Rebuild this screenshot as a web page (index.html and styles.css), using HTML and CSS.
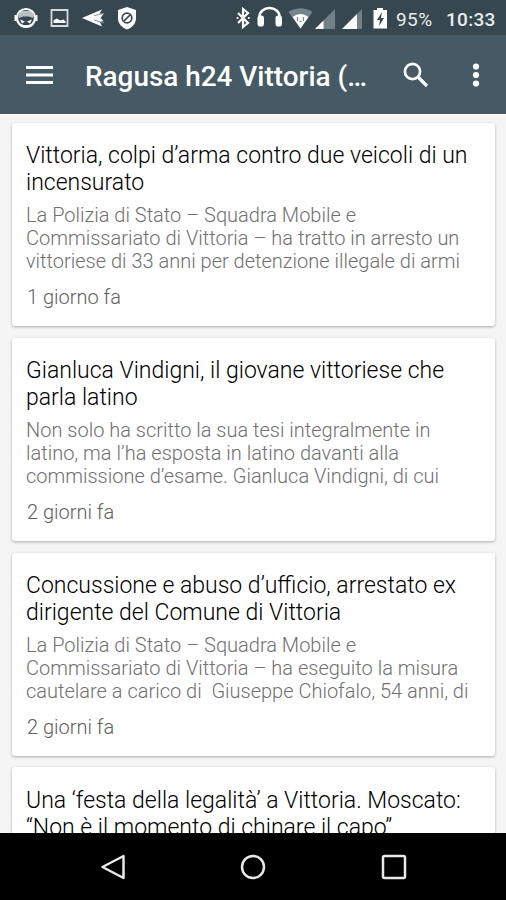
FILE: index.html
```
<!DOCTYPE html>
<html lang="it">
<head>
  <meta charset="UTF-8">
  <title>Ragusa h24 Vittoria</title>
  <link rel="stylesheet" href="styles.css">
</head>
<body>
  <div class="status-bar">
    <svg width="145" height="35" viewBox="0 0 145 35" fill="none">
      <!-- cat head -->
      <circle cx="26" cy="18" r="9" stroke="#fff" stroke-width="2.200"/>
      <path d="M15.500 15v6M36.500 15v6" stroke="#fff" stroke-width="2"/>
      <path d="M18 14l3.500-3h9l3.500 3-1 4-4-1.500h-6l-4 1.500z" fill="#b9c1c5"/>
      <path d="M20 19.500l5 2-3 2zM32 19.500l-5 2 3 2z" fill="#fff"/>
      <path d="M21 25.500q5 2 10 0" stroke="#fff" stroke-width="2.500"/>
      <!-- picture -->
      <path d="M51.500 10h16v16h-16z" stroke="#d5dadd" stroke-width="1.800"/>
      <path d="M53.500 23v-2.500l3-2 4 2 3-1 2 2V23z" fill="#fff"/>
      <!-- arrow -->
      <path d="M82 18l20-8.500-2.500 4 4 .5-3 4 3 3-3.500 1 2 4.500z" fill="#fff"/>
      <path d="M94 15.500l10-2M94 20l10 3" stroke="#82919a" stroke-width="1"/>
      <!-- shield -->
      <path d="M127 7l9 3v8c0 6-4 9.500-9 11.500-5-2-9-5.500-9-11.500v-8z" fill="#fff"/>
      <circle cx="127" cy="18" r="4.800" stroke="#37474f" stroke-width="1.700"/>
      <path d="M124 21l6-6" stroke="#37474f" stroke-width="1.700"/>
    </svg>
    <div class="status-right">
      <svg width="162" height="35" viewBox="230 0 162 35" fill="none">
        <!-- bluetooth -->
        <path d="M238 13l10 10-5 4V9l5 4-10 10" stroke="#fff" stroke-width="2.200"/>
        <path d="M237.500 18h.1M248.800 18h.1" stroke="#fff" stroke-width="2" stroke-linecap="round"/>
        <!-- headphones -->
        <path d="M259.500 20v-3.500a10 8.500 0 0 1 20 0V20" stroke="#fff" stroke-width="2.600"/>
        <rect x="257.500" y="15.500" width="6.500" height="11" rx="2.800" fill="#fff"/>
        <rect x="275.500" y="15.500" width="6.500" height="11" rx="2.800" fill="#fff"/>
        <!-- wifi -->
        <path d="M288.500 12q12-7.500 24 0l-12 16.500z" fill="#76838a"/>
        <path d="M292.500 17q8-6 16 0l-8 11.500z" fill="#fff"/>
        <path d="M297.500 17v4M303.500 17v4M299.500 21.500h2" stroke="#738087" stroke-width="1.200"/>
        <!-- mobile signal -->
        <path d="M335 9v20h-20z" fill="#738087"/>
        <path d="M323.500 20.500V29H315z" fill="#fff"/>
        <path d="M362 9v20h-20z" fill="#738087"/>
        <path d="M357 14v15h-15z" fill="#fff"/>
        <!-- battery -->
        <path d="M373.500 10h3.500V8h6v2h4v18.500h-13.500z" fill="#fff"/>
        <path d="M382 12l-5 8h3l-1 6 5-8h-3z" fill="#37474f"/>
      </svg>
      <span class="battery">95%</span>
      <span class="clock">10:33</span>
    </div>
  </div>

  <div class="toolbar">
    <svg class="menu-icon" width="27" height="20" viewBox="0 0 27 20">
      <path d="M0 2.500h27M0 10h27M0 17.500h27" stroke="#fff" stroke-width="3"/>
    </svg>
    <h1>Ragusa h24 Vittoria (…</h1>
    <svg class="search-icon" width="26" height="26" viewBox="0 0 26 26" fill="none" stroke="#fff">
      <circle cx="9.500" cy="9.500" r="7.600" stroke-width="2.700"/>
      <path d="M15 15l9 9" stroke-width="3.200"/>
    </svg>
    <svg class="more-icon" width="8" height="24" viewBox="0 0 8 24" fill="#fff">
      <circle cx="4" cy="3.500" r="3.100"/>
      <circle cx="4" cy="12" r="3.100"/>
      <circle cx="4" cy="20.500" r="3.100"/>
    </svg>
  </div>

  <div class="news-list">
    <div class="card">
      <h2>Vittoria, colpi d’arma contro due veicoli di un<br>incensurato</h2>
      <p>La Polizia di Stato – Squadra Mobile e<br>Commissariato di Vittoria – ha tratto in arresto un<br>vittoriese di 33 anni per detenzione illegale di armi</p>
      <div class="date">1 giorno fa</div>
    </div>
    <div class="card">
      <h2>Gianluca Vindigni, il giovane vittoriese che<br>parla latino</h2>
      <p>Non solo ha scritto la sua tesi integralmente in<br>latino, ma l’ha esposta in latino davanti alla<br>commissione d’esame. Gianluca Vindigni, di cui</p>
      <div class="date">2 giorni fa</div>
    </div>
    <div class="card">
      <h2>Concussione e abuso d’ufficio, arrestato ex<br>dirigente del Comune di Vittoria</h2>
      <p>La Polizia di Stato – Squadra Mobile e<br>Commissariato di Vittoria – ha eseguito la misura<br>cautelare a carico di&nbsp; Giuseppe Chiofalo, 54 anni, di</p>
      <div class="date">2 giorni fa</div>
    </div>
    <div class="card">
      <h2>Una ‘festa della legalità’ a Vittoria. Moscato:<br>“Non è il momento di chinare il capo”</h2>
    </div>
  </div>

  <div class="nav-bar">
    <svg width="26" height="26" viewBox="0 0 26 26" fill="none" stroke="#e8e8e8" stroke-width="2.500" stroke-linejoin="round">
      <path d="M2.500 13L23.500 2v22z"/>
    </svg>
    <svg width="26" height="26" viewBox="0 0 26 26" fill="none" stroke="#e8e8e8" stroke-width="2.500">
      <circle cx="13" cy="13" r="11"/>
    </svg>
    <svg width="26" height="26" viewBox="0 0 26 26" fill="none" stroke="#e8e8e8" stroke-width="2.500">
      <rect x="2" y="2" width="22" height="22" rx="1.500"/>
    </svg>
  </div>
</body>
</html>
```
FILE: styles.css
```
* {
  box-sizing: border-box;
  margin: 0;
  padding: 0;
}

body {
  width: 506px;
  height: 900px;
  overflow: hidden;
  display: flex;
  flex-direction: column;
  background: #f5f5f5;
  font-family: Roboto, sans-serif;
}

svg {
  display: block;
  flex: none;
}

.status-bar {
  height: 35px;
  flex: none;
  display: flex;
  justify-content: space-between;
  background: #37474f;
  color: #e9ecee;
}

.status-right {
  display: flex;
  align-items: center;
  width: 276px;
  font-size: 19px;
  line-height: 35px;
  white-space: nowrap;
  padding-top: 3px;
}

.status-right svg {
  margin-top: -3px;
}

.battery {
  width: 54px;
  padding-left: 4px;
  letter-spacing: 0.4px;
}

.clock {
  font-weight: 500;
  letter-spacing: 0.3px;
}

.toolbar {
  height: 79px;
  flex: none;
  display: flex;
  align-items: center;
  padding: 0 26px;
  background: #455a64;
  color: #fff;
}

.toolbar h1 {
  width: 318px;
  padding: 4px 0 0 32px;
  font-size: 27.9px;
  font-weight: 500;
  white-space: nowrap;
}

.search-icon {
  margin-left: 32px;
}

.more-icon {
  margin-left: 43px;
}

.news-list {
  flex: 1;
  min-height: 0;
  overflow: hidden;
  display: flex;
  flex-direction: column;
  gap: 11.8px;
  padding: 8px 11px 0 12px;
  border-top: 1px solid #fff;
}

.card {
  height: 203px;
  flex: none;
  padding: 19.4px 14px;
  background: #fff;
  border-radius: 3px;
  box-shadow: 0 1px 3px rgba(0, 0, 0, 0.3);
  white-space: nowrap;
}

.card h2 {
  font-size: 23px;
  font-weight: 300;
  line-height: 27px;
  color: #000;
}

.card p {
  margin-top: 8px;
  font-size: 20px;
  font-weight: 300;
  line-height: 23px;
  color: #707070;
}

.date {
  margin-top: 13px;
  padding-left: 1px;
  font-size: 20px;
  font-weight: 300;
  line-height: 23px;
  color: #606060;
}

.nav-bar {
  height: 67px;
  flex: none;
  display: flex;
  align-items: center;
  justify-content: center;
  gap: 114.500px;
  background: #000;
}
```
